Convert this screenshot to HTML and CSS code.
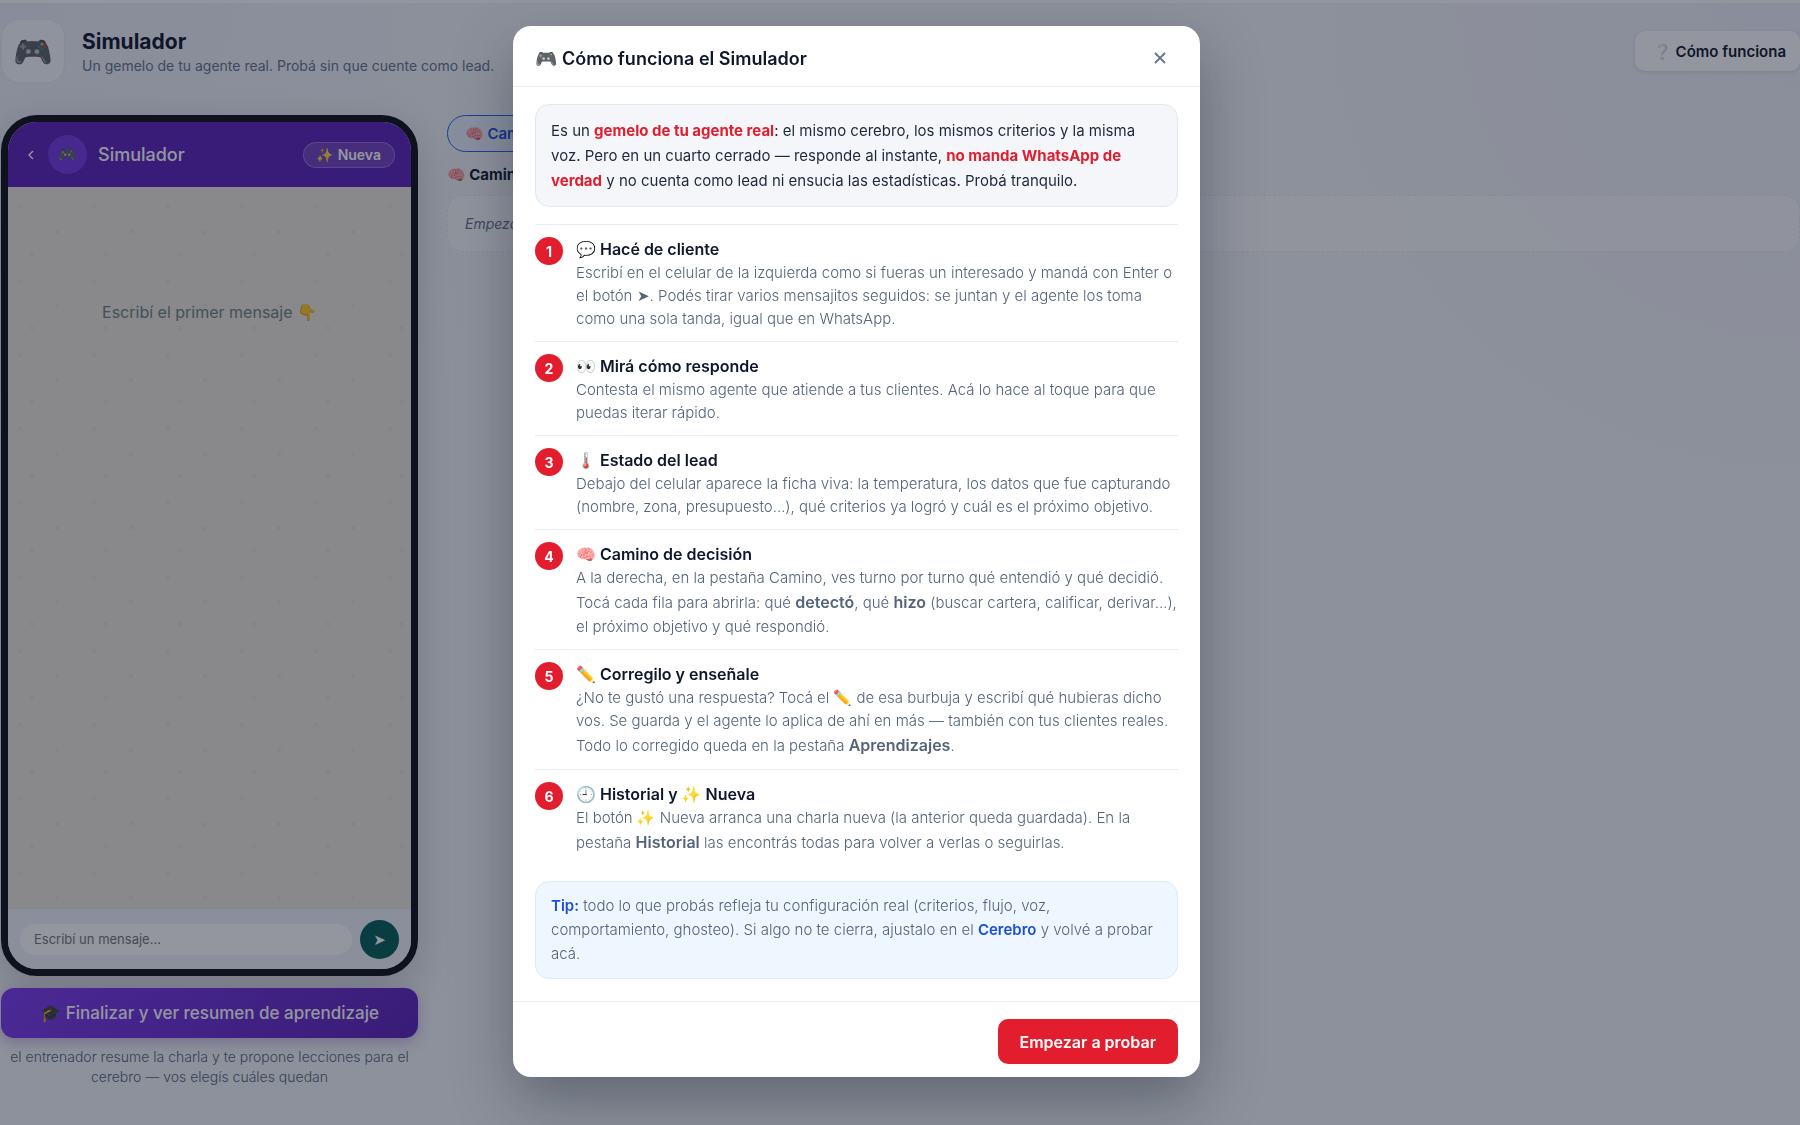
FILE: index.html
```html
<!DOCTYPE html>
<html lang="es">
<head>
  <meta charset="UTF-8">
  <meta name="viewport" content="width=device-width, initial-scale=1.0">
  <title>Simulador</title>
  <link rel="stylesheet" href="styles.css">
</head>
<body>
  <div class="page">
    <header class="page-header">
      <div class="page-icon">🎮</div>
      <div class="page-title">
        <h1>Simulador</h1>
        <p>Un gemelo de tu agente real. Probá sin que cuente como lead.</p>
      </div>
      <button class="help-btn" type="button">❔ Cómo funciona</button>
    </header>

    <main class="layout">
      <section class="left">
        <div class="phone">
          <div class="phone-header">
            <button class="back" type="button" aria-label="Volver">
              <svg width="6" height="10" viewBox="0 0 6 10" fill="none" stroke="currentColor" stroke-width="1.4">
                <path d="M5 1L1 5l4 4"/>
              </svg>
            </button>
            <div class="avatar">🎮</div>
            <span class="phone-name">Simulador</span>
            <button class="new-btn" type="button">✨ Nueva</button>
          </div>
          <div class="chat">
            <p class="chat-empty">Escribí el primer mensaje 👇</p>
          </div>
          <form class="composer">
            <input type="text" placeholder="Escribí un mensaje..." aria-label="Mensaje">
            <button type="button" aria-label="Enviar">➤</button>
          </form>
        </div>
        <button class="finish-btn" type="button">🎓 Finalizar y ver resumen de aprendizaje</button>
        <p class="finish-note">el entrenador resume la charla y te propone lecciones para el cerebro — vos elegís cuáles quedan</p>
      </section>

      <section class="right">
        <div class="tabs">
          <button class="tab" type="button">🧠 Camino</button>
        </div>
        <h2>🧠 Camino</h2>
        <div class="empty-box">Empezá</div>
      </section>
    </main>
  </div>

  <div class="overlay" id="overlay">
    <div class="modal" role="dialog" aria-modal="true" aria-labelledby="modal-title">
      <div class="modal-header">
        <h2 id="modal-title">🎮 Cómo funciona el Simulador</h2>
        <button class="close" type="button" aria-label="Cerrar" onclick="closeHelp()">
          <svg width="12" height="12" viewBox="0 0 12 12" fill="none" stroke="currentColor" stroke-width="1.8">
            <path d="M1 1l10 10M11 1L1 11"/>
          </svg>
        </button>
      </div>
      <div class="modal-body">
        <p class="intro">Es un <strong>gemelo de tu agente real</strong>: el mismo cerebro, los mismos criterios y la misma voz. Pero en un cuarto cerrado — responde al instante, <strong>no manda WhatsApp de verdad</strong> y no cuenta como lead ni ensucia las estadísticas. Probá tranquilo.</p>

        <div class="steps">
          <div class="step">
            <span class="num">1</span>
            <div class="step-text">
              <h3>💬 Hacé de cliente</h3>
              <p>Escribí en el celular de la izquierda como si fueras un interesado y mandá con Enter o el botón ➤. Podés tirar varios mensajitos seguidos: se juntan y el agente los toma como una sola tanda, igual que en WhatsApp.</p>
            </div>
          </div>
          <div class="step">
            <span class="num">2</span>
            <div class="step-text">
              <h3>👀 Mirá cómo responde</h3>
              <p>Contesta el mismo agente que atiende a tus clientes. Acá lo hace al toque para que puedas iterar rápido.</p>
            </div>
          </div>
          <div class="step">
            <span class="num">3</span>
            <div class="step-text">
              <h3>🌡️ Estado del lead</h3>
              <p>Debajo del celular aparece la ficha viva: la temperatura, los datos que fue capturando (nombre, zona, presupuesto…), qué criterios ya logró y cuál es el próximo objetivo.</p>
            </div>
          </div>
          <div class="step">
            <span class="num">4</span>
            <div class="step-text">
              <h3>🧠 Camino de decisión</h3>
              <p>A la derecha, en la pestaña Camino, ves turno por turno qué entendió y qué decidió. Tocá cada fila para abrirla: qué <strong>detectó</strong>, qué <strong>hizo</strong> (buscar cartera, calificar, derivar…), el próximo objetivo y qué respondió.</p>
            </div>
          </div>
          <div class="step">
            <span class="num">5</span>
            <div class="step-text">
              <h3>✏️ Corregilo y enseñale</h3>
              <p>¿No te gustó una respuesta? Tocá el ✏️ de esa burbuja y escribí qué hubieras dicho vos. Se guarda y el agente lo aplica de ahí en más — también con tus clientes reales. Todo lo corregido queda en la pestaña <strong>Aprendizajes</strong>.</p>
            </div>
          </div>
          <div class="step">
            <span class="num">6</span>
            <div class="step-text">
              <h3>🕘 Historial y ✨ Nueva</h3>
              <p>El botón ✨ Nueva arranca una charla nueva (la anterior queda guardada). En la pestaña <strong>Historial</strong> las encontrás todas para volver a verlas o seguirlas.</p>
            </div>
          </div>
        </div>

        <p class="tip"><strong>Tip:</strong> todo lo que probás refleja tu configuración real (criterios, flujo, voz, comportamiento, ghosteo). Si algo no te cierra, ajustalo en el <strong>Cerebro</strong> y volvé a probar acá.</p>
      </div>
      <div class="modal-footer">
        <button class="start-btn" type="button" onclick="closeHelp()">Empezar a probar</button>
      </div>
    </div>
  </div>

  <script>
    function closeHelp() {
      document.getElementById('overlay').style.display = 'none';
    }
  </script>
</body>
</html>
```
FILE: styles.css
```css
* {
  box-sizing: border-box;
}

body {
  margin: 0;
  min-height: 100vh;
  font-family: Inter, "Noto Color Emoji", "DejaVu Sans", sans-serif;
  font-size: 15px;
  color: #0f172a;
  background:
    radial-gradient(circle at 0 0, rgba(99, 102, 241, 0.05), transparent 600px),
    radial-gradient(circle at 100% 0, rgba(139, 92, 246, 0.05), transparent 500px),
    #f4f6f7;
}

h1, h2, h3, p {
  margin: 0;
}

button, input {
  font-family: inherit;
}

button {
  cursor: pointer;
}

/* Page behind the dialog */
.page {
  border-top: 3px solid #fff;
  padding: 16px 0 0 1px;
}

.page-header {
  display: flex;
  align-items: center;
  gap: 17px;
  margin-bottom: 32px;
}

.page-icon {
  display: grid;
  place-items: center;
  width: 64px;
  height: 64px;
  border: 1px solid #e5eaf3;
  border-radius: 18px;
  background: #f8fafc;
  font-size: 32px;
}

.page-title {
  flex: 1;
  padding-top: 3px;
}

.page-title h1 {
  font-size: 21px;
  line-height: 26px;
  font-weight: 700;
}

.page-title p {
  font-size: 14px;
  line-height: 22px;
  color: #64748b;
}

.help-btn {
  height: 40px;
  padding: 0 14px 0 18px;
  border: 0;
  border-radius: 10px;
  background: #fff;
  color: #0f172a;
  font-size: 15px;
  font-weight: 600;
  box-shadow: 0 1px 4px rgba(15, 23, 42, 0.12);
}

.layout {
  display: grid;
  grid-template-columns: 417px 1fr;
  gap: 29px;
}

.phone {
  display: flex;
  flex-direction: column;
  height: calc(100vh - 264px);
  border: 7px solid #0b0f14;
  border-radius: 36px;
  overflow: hidden;
  box-shadow: 0 14px 40px rgba(15, 23, 42, 0.2);
}

.phone-header {
  display: flex;
  align-items: center;
  gap: 11px;
  height: 65px;
  padding: 0 16px;
  background: #5b21b6;
  color: #fff;
}

.back {
  width: 13px;
  padding: 0;
  border: 0;
  background: none;
  color: #fff;
}

.avatar {
  display: grid;
  place-items: center;
  width: 39px;
  height: 39px;
  border-radius: 50%;
  background: #7438e0;
  font-size: 15px;
}

.phone-name {
  flex: 1;
  font-size: 18px;
  font-weight: 500;
}

.new-btn {
  height: 26px;
  padding: 0 13px;
  border: 1px solid rgba(255, 255, 255, 0.25);
  border-radius: 13px;
  background: rgba(255, 255, 255, 0.15);
  color: #fff;
  font-size: 14px;
  font-weight: 600;
}

.chat {
  flex: 1;
  padding-top: 113px;
  background-color: #ede6da;
  background-image:
    radial-gradient(circle at 12px 20px, #e4ddd2 1px, transparent 3px),
    radial-gradient(circle at 49px 45px, #e4ddd2 1px, transparent 3px),
    radial-gradient(circle at 24px 67px, #e4ddd2 1px, transparent 3px);
  background-size: 74px 74px;
  text-align: center;
}

.chat-empty {
  font-size: 16px;
  line-height: 24px;
  color: #6b8380;
}

.composer {
  display: flex;
  align-items: center;
  gap: 8px;
  height: 60px;
  padding: 0 12px;
  background: #f0f2f7;
}

.composer input {
  flex: 1;
  min-width: 0;
  height: 31px;
  padding: 0 14px;
  border: 0;
  border-radius: 16px;
  background: #fff;
  font-size: 13px;
}

.composer input::placeholder {
  color: #757575;
}

.composer button {
  width: 39px;
  height: 39px;
  padding: 0;
  border: 0;
  border-radius: 50%;
  background: #075e54;
  color: #fff;
  font-size: 15px;
}

.finish-btn {
  width: 100%;
  height: 50px;
  margin-top: 12px;
  border: 0;
  border-radius: 13px;
  background: linear-gradient(135deg, #7c3aed, #5b21b6);
  color: #fff;
  font-size: 17px;
  font-weight: 500;
  box-shadow: 0 4px 14px rgba(91, 33, 182, 0.3);
}

.finish-note {
  padding-top: 9px;
  font-size: 14px;
  line-height: 20px;
  font-weight: 300;
  text-align: center;
  color: #55647a;
}

.tab {
  height: 37px;
  padding: 0 17px;
  border: 1px solid #2563eb;
  border-radius: 19px;
  background: #eaf2fd;
  color: #1d4ed8;
  font-size: 15px;
  font-weight: 600;
}

.right h2 {
  margin: 12px 0 9px;
  font-size: 15px;
  line-height: 22px;
}

.empty-box {
  padding: 16px 17px;
  border: 1px dashed #e4e9f0;
  border-radius: 16px;
  background: rgba(255, 255, 255, 0.6);
  font-size: 14px;
  line-height: 23px;
  font-style: italic;
  color: #64748b;
}

/* Help dialog */
.overlay {
  position: fixed;
  inset: 0;
  display: grid;
  place-items: center;
  padding: 26px 87px 48px 0;
  background: rgba(15, 23, 42, 0.45);
}

.modal {
  width: 100%;
  max-width: 687px;
  border-radius: 18px;
  background: #fff;
  box-shadow: 0 24px 60px rgba(15, 23, 42, 0.35);
}

.modal-header {
  display: flex;
  align-items: center;
  justify-content: space-between;
  height: 61px;
  padding: 4px 22px 0;
  border-bottom: 1px solid #e8ebf4;
}

.modal-header h2 {
  font-size: 18px;
  font-weight: 600;
}

.close {
  display: grid;
  place-items: center;
  width: 36px;
  height: 36px;
  padding: 0;
  border: 0;
  background: none;
  color: #64748b;
}

.modal-body {
  padding: 17px 22px 22px;
}

.intro {
  padding: 13px 15px;
  border: 1px solid #e2e8f2;
  border-radius: 14px;
  background: #f4f6fa;
  font-size: 15px;
  line-height: 25px;
  color: #1e293b;
}

.intro strong {
  font-weight: 700;
  color: #e11d2e;
}

.steps {
  margin: 17px 0 15px;
}

.step {
  display: flex;
  gap: 13px;
  padding: 12px 0 11px;
  border-top: 1px solid #e8ebf2;
}

.num {
  flex: none;
  display: grid;
  place-items: center;
  width: 28px;
  height: 28px;
  border-radius: 50%;
  background: #e11d2e;
  color: #fff;
  font-size: 14px;
  font-weight: 700;
}

.step h3 {
  font-size: 16px;
  line-height: 24px;
  font-weight: 600;
}

.step p {
  font-size: 15px;
  line-height: 23px;
  font-weight: 300;
  color: #55647a;
}

.step strong {
  font-size: 16px;
  line-height: 26px;
  font-weight: 600;
}

.tip {
  padding: 12px 15px;
  border: 1px solid #dbeafe;
  border-radius: 14px;
  background: #eef6ff;
  font-size: 15px;
  line-height: 24px;
  font-weight: 300;
  color: #55647a;
}

.tip strong {
  font-weight: 600;
  color: #1d4ed8;
}

.modal-footer {
  display: flex;
  justify-content: flex-end;
  padding: 17px 22px 13px;
  border-top: 1px solid #e8ebf2;
}

.start-btn {
  height: 45px;
  padding: 0 22px;
  border: 0;
  border-radius: 10px;
  background: #e11d2e;
  color: #fff;
  font-size: 16px;
  font-weight: 600;
}
```
